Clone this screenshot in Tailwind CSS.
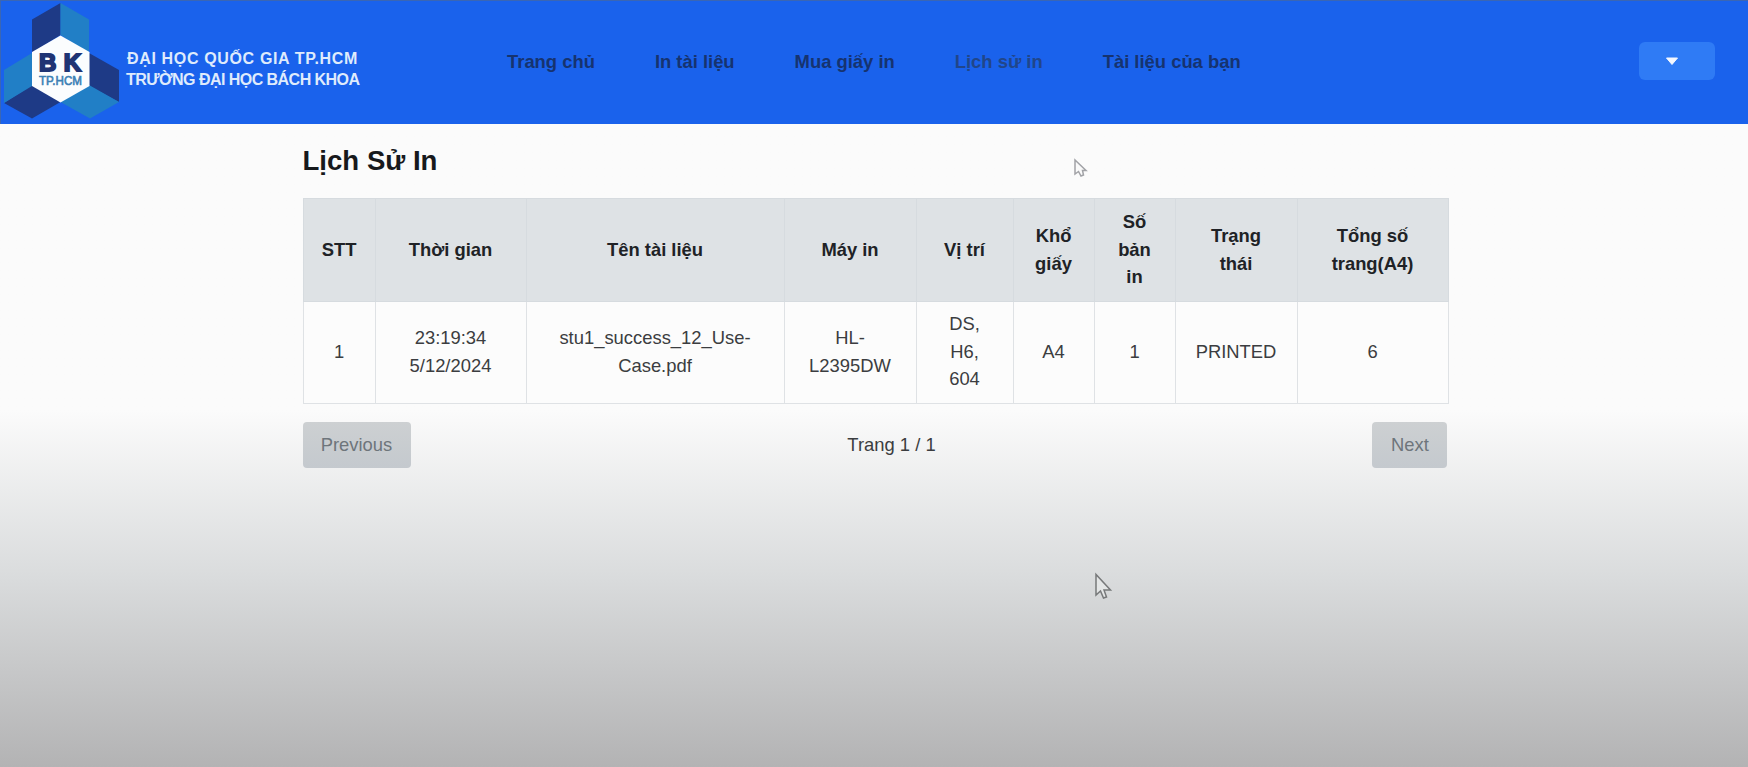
<!DOCTYPE html>
<html lang="vi">
<head>
<meta charset="utf-8">
<title>Lịch Sử In</title>
<script src="https://cdn.jsdelivr.net/npm/@tailwindcss/browser@4"></script>
</head>
<body class="relative h-[767px] overflow-hidden bg-[#fbfbfb] font-['Liberation_Sans',Arial,sans-serif] text-[18.4px] leading-[27.6px] text-[#3b3d40]">
<div class="flex h-full flex-col bg-linear-to-b from-[#fbfbfb] from-[53.5%] via-[#dadcdd] via-[75%] to-[#b3b3b4]">
  <header class="flex h-[123.5px] shrink-0 items-start border-t border-l border-[#3a66b4] bg-[#1a62ec]">
    <svg class="mt-px ml-px h-[120px] w-[120px] shrink-0" viewBox="2 2 120 120" role="img" aria-label="BK TP.HCM">
      <g fill="#1e3a86"><path d="M60.5 3 32 19.500V53L60.500 35Z"/><path d="M4 103 32 85 60.500 102 32 118.500Z"/><path d="M89 53 119 70V102L89 86Z"/></g>
      <g fill="#217fc6"><path d="M60.500 3 89 19.500V53L60.500 35Z"/><path d="M32 53 4 70V103L32 86Z"/><path d="M89 85 119 102 90 118.500 60.500 102Z"/></g>
      <path d="M60.500 35.500 89.500 52V86L60.500 102.500 32 86V52Z" fill="#fbfdfe"/>
      <text x="39" y="70.500" font-family="Liberation Sans" font-weight="700" font-size="24" fill="#1f3474" stroke="#1f3474" stroke-width="2" textLength="42" lengthAdjust="spacing">BK</text>
      <text x="39" y="84.500" font-family="Liberation Sans" font-size="12" fill="#3c80b4" stroke="#3c80b4" stroke-width=".6" textLength="43" lengthAdjust="spacingAndGlyphs">TP.HCM</text>
    </svg>
    <div class="mt-[47px] ml-[4px] w-[260px] shrink-0 text-[16px] leading-[21.5px] font-bold whitespace-nowrap text-[#dfebfc]">
      <div class="ml-px tracking-[0.65px]">ĐẠI HỌC QUỐC GIA TP.HCM</div>
      <div class="-mt-px tracking-[-0.54px]">TRƯỜNG ĐẠI HỌC BÁCH KHOA</div>
    </div>
    <nav class="mt-[46.5px] ml-[121px] flex gap-[60px] text-[18.4px] font-bold whitespace-nowrap text-[#16336f]">
      <a>Trang chủ</a><a>In tài liệu</a><a>Mua giấy in</a><a class="text-[#214689]">Lịch sử in</a><a>Tài liệu của bạn</a>
    </nav>
    <button class="mt-[41px] mr-[33px] ml-auto flex h-[38px] w-[76px] items-center rounded-[6px] bg-[#2f7bf5] pl-[26px]" aria-label="Menu">
      <svg class="mt-px h-[9px] w-[14px]" viewBox="0 0 14 9"><path d="M1.500 1H12.500L7 7.500Z" fill="#f4f8ff" stroke="#f4f8ff" stroke-linejoin="round"/></svg>
    </button>
  </header>
  <main class="ml-[302.5px] flex w-[1145px] flex-col pt-[19.500px]">
    <h1 class="h-[54.500px] text-[27.6px] leading-[36.8px] font-bold text-[#17191c]">Lịch Sử In</h1>
    <table class="w-[1145px] table-fixed border-collapse text-center">
      <colgroup><col class="w-[72px]"><col class="w-[151px]"><col class="w-[258px]"><col class="w-[132px]"><col class="w-[97px]"><col class="w-[81px]"><col class="w-[81px]"><col class="w-[122px]"><col class="w-[151px]"></colgroup>
      <thead class="bg-[#dee2e5] text-[#202226]">
        <tr class="h-[103px] *:border *:border-[#d6dbdf] *:p-0">
          <th>STT</th><th>Thời gian</th><th>Tên tài liệu</th><th>Máy in</th><th>Vị trí</th><th>Khổ<br>giấy</th><th>Số<br>bản<br>in</th><th>Trạng<br>thái</th><th>Tổng số<br>trang(A4)</th>
        </tr>
      </thead>
      <tbody class="bg-[#fcfcfc]">
        <tr class="h-[102px] *:border *:border-[#dfe2e5] *:p-0 *:pb-px">
          <td>1</td><td>23:19:34<br>5/12/2024</td><td>stu1_success_12_Use-<br>Case.pdf</td><td>HL-<br>L2395DW</td><td>DS,<br>H6,<br>604</td><td>A4</td><td>1</td><td>PRINTED</td><td>6</td>
        </tr>
      </tbody>
    </table>
    <div class="mt-[18.5px] flex items-center justify-between">
      <button class="h-[46px] w-[108px] rounded-[4px] bg-linear-to-b from-[#cdd0d2] to-[#c4c9ce] text-[#6e757b]">Previous</button>
      <span>Trang 1 / 1</span>
      <button class="h-[46px] w-[75px] rounded-[4px] bg-linear-to-b from-[#cdd0d2] to-[#c4c9ce] text-[#6e757b]">Next</button>
    </div>
  </main>
</div>
<svg class="absolute top-[158px] left-[1073px] h-[20px] w-[15px]" viewBox="0 0 15 20"><path d="M2 2V16L5.500 13.500 8 18 10.500 17 9.500 12.500H13Z" fill="#fafafa" stroke="#a2a3a7" stroke-width="1.500"/></svg>
<svg class="absolute top-[572px] left-[1094px] h-[29px] w-[20px]" viewBox="0 0 20 29"><path d="M2 2.500V23L6.500 19 9.500 26 12.500 25 10 18H16.500Z" fill="#e4e6e6" stroke="#77797a" stroke-width="1.500"/></svg>
</body>
</html>
